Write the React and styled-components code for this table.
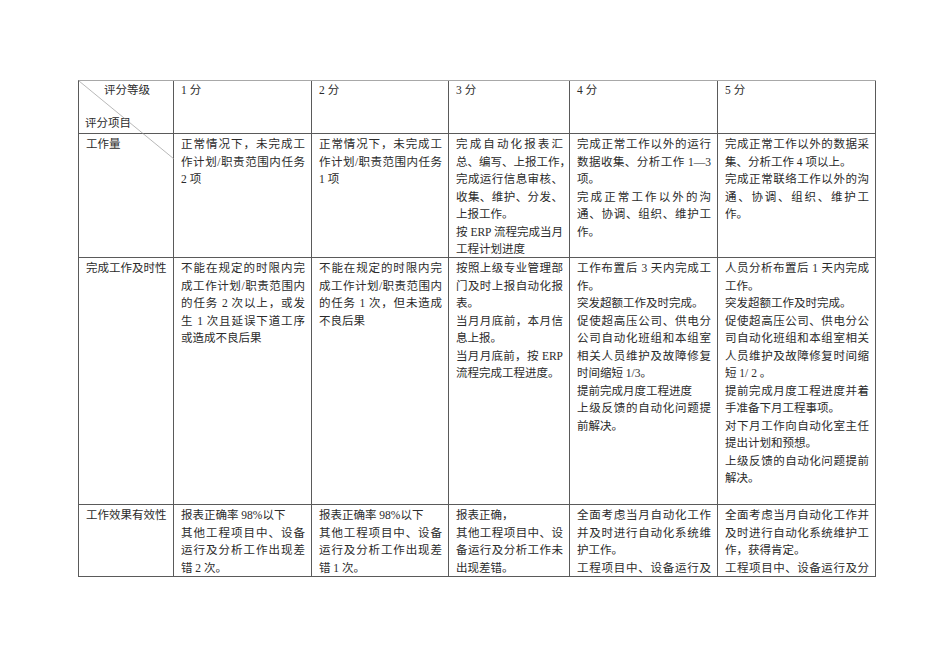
import React from "react";
import styled, { createGlobalStyle } from "styled-components";

const GlobalStyle = createGlobalStyle`
  html, body {
    margin: 0;
    padding: 0;
    background: #ffffff;
  }
  body {
    font-family: "Liberation Serif", "Noto Sans CJK SC", serif;
  }
`;

const Page = styled.div`
  width: 950px;
  height: 672px;
  padding: 80px 0 0 78px;
  box-sizing: border-box;
  background: #fff;
`;

const Table = styled.div`
  display: grid;
  grid-template-columns: 95px 138px 137px 121px 148px 158px;
  grid-template-rows: 53px 124px 247px 72px;
  width: max-content;
  border-left: 1px solid #5a5a5a;
  border-top: 1px solid #a8a8a8;
`;

const Cell = styled.div`
  position: relative;
  box-sizing: border-box;
  border-right: 1px solid #5a5a5a;
  border-bottom: 1px solid #5a5a5a;
  padding: ${(p) => (p.$head ? "1px 6px 0 7px" : "2px 6px 0 7px")};
  overflow: ${(p) => (p.$clip ? "hidden" : "visible")};
  color: #2b2b2b;
  font-size: 11.5px;
  line-height: 17.5px;
`;

const Corner = styled(Cell)`
  display: flex;
  flex-direction: column;
  justify-content: space-between;
  padding: 1px 6px 1px 6px;
`;

const CornerTop = styled.span`
  padding-left: 19px;
  white-space: nowrap;
`;

const CornerBottom = styled.span`
  white-space: nowrap;
`;

const Diagonal = styled.svg`
  position: absolute;
  top: 0;
  left: 0;
  overflow: visible;
  pointer-events: none;
  z-index: 2;
`;

const Line = styled.div`
  white-space: nowrap;
  text-align: ${(p) => (p.$full ? "justify" : "left")};
  text-align-last: ${(p) => (p.$full ? "justify" : "left")};
  text-justify: inter-character;
`;

// "|" separates lines; a trailing "|" means the paragraph runs on past the cut
const rows = [
  {
    label: "工作量",
    cells: [
      ["正常情况下，未完成工|作计划/职责范围内任务|2 项"],
      ["正常情况下，未完成工|作计划/职责范围内任务|1 项"],
      [
        "完成自动化报表汇|总、编写、上报工作，|完成运行信息审核、|收集、维护、分发、|上报工作。",
        "按 ERP 流程完成当月|工程计划进度",
      ],
      [
        "完成正常工作以外的运行|数据收集、分析工作 1—3|项。",
        "完成正常工作以外的沟|通、协调、组织、维护工|作。",
      ],
      [
        "完成正常工作以外的数据采|集、分析工作 4 项以上。",
        "完成正常联络工作以外的沟|通、协调、组织、维护工|作。",
      ],
    ],
  },
  {
    label: "完成工作及时性",
    cells: [
      [
        "不能在规定的时限内完|成工作计划/职责范围内|的任务 2 次以上，或发|生 1 次且延误下道工序|或造成不良后果",
      ],
      ["不能在规定的时限内完|成工作计划/职责范围内|的任务 1 次，但未造成|不良后果"],
      [
        "按照上级专业管理部|门及时上报自动化报|表。",
        "当月月底前，本月信|息上报。",
        "当月月底前，按 ERP|流程完成工程进度。",
      ],
      [
        "工作布置后 3 天内完成工|作。",
        "突发超额工作及时完成。",
        "促使超高压公司、供电分|公司自动化班组和本组室|相关人员维护及故障修复|时间缩短 1/3。",
        "提前完成月度工程进度",
        "上级反馈的自动化问题提|前解决。",
      ],
      [
        "人员分析布置后 1 天内完成|工作。",
        "突发超额工作及时完成。",
        "促使超高压公司、供电分公|司自动化班组和本组室相关|人员维护及故障修复时间缩|短 1/ 2 。",
        "提前完成月度工程进度并着|手准备下月工程事项。",
        "对下月工作向自动化室主任|提出计划和预想。",
        "上级反馈的自动化问题提前|解决。",
      ],
    ],
  },
  {
    label: "工作效果有效性",
    clip: true,
    cells: [
      ["报表正确率 98%以下", "其他工程项目中、设备|运行及分析工作出现差|错 2 次。"],
      ["报表正确率 98%以下", "其他工程项目中、设备|运行及分析工作出现差|错 1 次。"],
      ["报表正确，", "其他工程项目中、设|备运行及分析工作未|出现差错。"],
      ["全面考虑当月自动化工作|并及时进行自动化系统维|护工作。", "工程项目中、设备运行及|"],
      ["全面考虑当月自动化工作并|及时进行自动化系统维护工|作，获得肯定。", "工程项目中、设备运行及分|"],
    ],
  },
];

const grades = ["1 分", "2 分", "3 分", "4 分", "5 分"];

function Paragraph({ text }) {
  const parts = text.split("|");
  const lines = parts.filter((l, i) => !(i === parts.length - 1 && l === ""));
  const open = parts[parts.length - 1] === "";
  return lines.map((line, i) => (
    <Line key={i} $full={open || i < lines.length - 1}>
      {line}
    </Line>
  ));
}

export default function App() {
  return (
    <>
      <GlobalStyle />
      <Page>
        <Table>
          <Corner>
            <Diagonal width="95" height="78">
              <line x1="0" y1="0" x2="95" y2="78" stroke="#9a9a9a" strokeWidth="0.7" />
            </Diagonal>
            <CornerTop>评分等级</CornerTop>
            <CornerBottom>评分项目</CornerBottom>
          </Corner>
          {grades.map((g) => (
            <Cell key={g} $head>
              {g}
            </Cell>
          ))}
          {rows.map((row) => (
            <React.Fragment key={row.label}>
              <Cell $clip={row.clip}>
                <Line>{row.label}</Line>
              </Cell>
              {row.cells.map((paras, ci) => (
                <Cell key={ci} $clip={row.clip}>
                  {paras.map((p, pi) => (
                    <Paragraph key={pi} text={p} />
                  ))}
                </Cell>
              ))}
            </React.Fragment>
          ))}
        </Table>
      </Page>
    </>
  );
}
